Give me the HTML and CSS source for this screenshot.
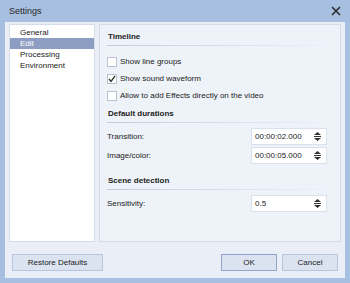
FILE: index.html
```html
<!DOCTYPE html>
<html lang="en">
<head>
    <meta charset="UTF-8">
    <title>Settings</title>
    <link rel="stylesheet" href="styles.css">
</head>
<body>
    <div class="window">
        <div class="titlebar">
            <span class="title">Settings</span>
            <svg class="close" width="10" height="10" viewBox="0 0 10 10">
                <path d="M1 1 L9 9 M9 1 L1 9" stroke="#2b2b2b" stroke-width="1.6"/>
            </svg>
        </div>

        <div class="client">
            <div class="content">
                <ul class="nav-list">
                    <li>General</li>
                    <li class="selected">Edit</li>
                    <li>Processing</li>
                    <li>Environment</li>
                </ul>

                <div class="panel">
                    <div class="section-title">Timeline</div>
                    <div class="checks">
                        <label class="check"><span class="box"></span>Show line groups</label>
                        <label class="check"><span class="box">
                            <svg width="8" height="8" viewBox="0 0 8 8"><path d="M1 4 L3 6.5 L7 1" fill="none" stroke="#333" stroke-width="1.3"/></svg>
                        </span>Show sound waveform</label>
                        <label class="check"><span class="box"></span>Allow to add Effects directly on the video</label>
                    </div>

                    <div class="section-title">Default durations</div>
                    <div class="fields">
                        <div class="field">
                            <span>Transition:</span>
                            <div class="spin"><span>00:00:02.000</span><svg width="7" height="9" viewBox="0 0 7 9"><path d="M0 3 L3.5 0 L7 3 Z M0 4 H7 V5 H0 Z M0 6 H7 L3.5 9 Z" fill="#333"/></svg></div>
                        </div>
                        <div class="field">
                            <span>Image/color:</span>
                            <div class="spin"><span>00:00:05.000</span><svg width="7" height="9" viewBox="0 0 7 9"><path d="M0 3 L3.5 0 L7 3 Z M0 4 H7 V5 H0 Z M0 6 H7 L3.5 9 Z" fill="#333"/></svg></div>
                        </div>
                    </div>

                    <div class="section-title">Scene detection</div>
                    <div class="fields">
                        <div class="field">
                            <span>Sensitivity:</span>
                            <div class="spin"><span>0.5</span><svg width="7" height="9" viewBox="0 0 7 9"><path d="M0 3 L3.5 0 L7 3 Z M0 4 H7 V5 H0 Z M0 6 H7 L3.5 9 Z" fill="#333"/></svg></div>
                        </div>
                    </div>
                </div>
            </div>

            <div class="footer">
                <button class="button restore">Restore Defaults</button>
                <div class="right-buttons">
                    <button class="button default">OK</button>
                    <button class="button">Cancel</button>
                </div>
            </div>
        </div>
    </div>
</body>
</html>
```

FILE: styles.css
```css
* {
    margin: 0;
    padding: 0;
    box-sizing: border-box;
}

body {
    font-family: "Liberation Sans", Arial, sans-serif;
    font-size: 8px;
    color: #222;
    background-color: #a7bfe1;
}

.window {
    width: 350px;
    height: 283px;
    background-color: #a7bfe1;
    padding: 0 5px 5px 5px;
    display: flex;
    flex-direction: column;
}

.titlebar {
    height: 22px;
    display: flex;
    align-items: center;
    justify-content: space-between;
    padding: 0 4px 0 4px;
}

.title {
    font-size: 9px;
    color: #2a2a2a;
}

.close {
    margin-top: -1px;
}

.client {
    flex: 1;
    background-color: #e9eef7;
    padding: 2px 4px 7px 4px;
    display: flex;
    flex-direction: column;
}

.content {
    height: 218px;
    display: flex;
    gap: 4px;
}

.nav-list {
    width: 86px;
    list-style: none;
    background-color: #fff;
    border: 1px solid #d6ddea;
    padding-top: 2px;
}

.nav-list li {
    height: 11px;
    line-height: 11px;
    padding-left: 10px;
}

.nav-list li.selected {
    background-color: #8e9dc2;
    color: #fff;
}

.panel {
    flex: 1;
    background-color: #eef2f9;
    border: 1px solid #d6ddea;
    padding: 4px 3px 0 7px;
}

.section-title {
    font-weight: bold;
    height: 17px;
    line-height: 16px;
    padding-left: 1px;
    background: linear-gradient(to right, #c3ccdd, rgba(195, 204, 221, 0)) no-repeat left bottom / 100% 1px;
}

.checks {
    padding: 7px 0 2px 0;
}

.check {
    display: flex;
    align-items: center;
    height: 17px;
}

.box {
    width: 10px;
    height: 10px;
    background-color: #fff;
    border: 1px solid #b9c2d2;
    margin-right: 3px;
    display: flex;
    align-items: center;
    justify-content: center;
}

.fields {
    padding: 5px 0 9px 0;
    display: flex;
    flex-direction: column;
    gap: 2px;
}

.field {
    display: flex;
    align-items: center;
    justify-content: space-between;
    padding-right: 10px;
    height: 17px;
}

.spin {
    width: 76px;
    height: 17px;
    background-color: #fff;
    border: 1px solid #dbe1ec;
    display: flex;
    align-items: center;
    justify-content: space-between;
    padding: 0 5px 0 3px;
}

.footer {
    margin-top: 12px;
    display: flex;
    justify-content: space-between;
    padding: 0 3px;
}

.right-buttons {
    display: flex;
    gap: 5px;
}

.button {
    width: 56px;
    height: 17px;
    font-family: "Liberation Sans", Arial, sans-serif;
    font-size: 8px;
    color: #222;
    background-color: #dbe3f1;
    border: 1px solid #b7c5de;
}

.button.restore {
    width: 91px;
}

.button.default {
    border-color: #90a5c8;
}
```
